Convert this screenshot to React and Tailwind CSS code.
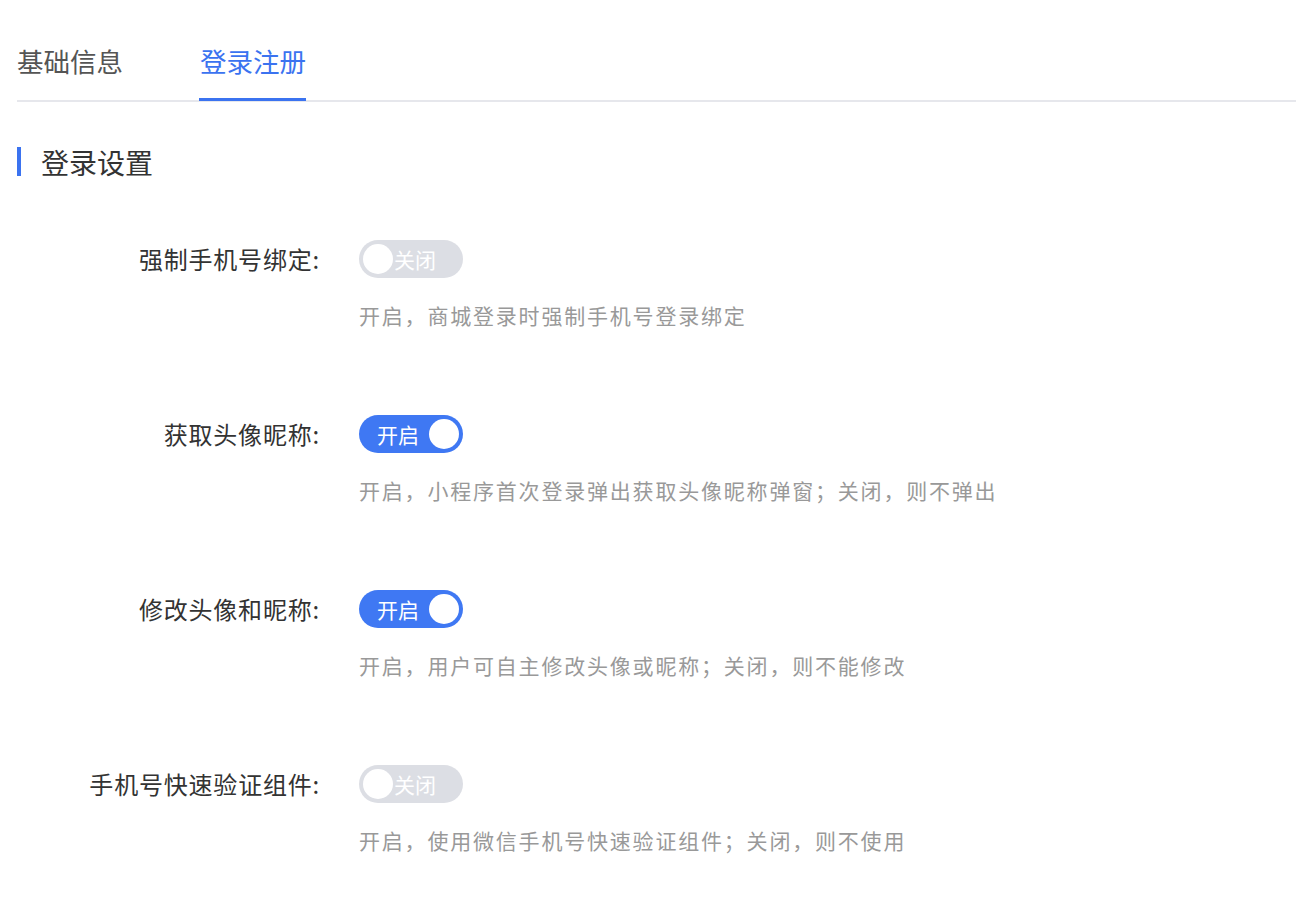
import React, { useState } from 'react';

const rows = [
    { label: '强制手机号绑定:', on: false, desc: '开启，商城登录时强制手机号登录绑定' },
    { label: '获取头像昵称:', on: true, desc: '开启，小程序首次登录弹出获取头像昵称弹窗；关闭，则不弹出' },
    { label: '修改头像和昵称:', on: true, desc: '开启，用户可自主修改头像或昵称；关闭，则不能修改' },
    { label: '手机号快速验证组件:', on: false, desc: '开启，使用微信手机号快速验证组件；关闭，则不使用' },
];

const Toggle = ({ on, onChange }) => (
    <button
        onClick={onChange}
        className={`relative flex h-[38px] w-[104px] items-center rounded-full ${on ? 'bg-[#3f78f3]' : 'bg-[#dcdee4]'}`}
    >
        {on ? (
            <>
                <span className="pl-[18px] text-[21px] leading-none text-white">开启</span>
                <span className="absolute right-[4px] top-[4px] h-[30px] w-[30px] rounded-full bg-white" />
            </>
        ) : (
            <>
                <span className="absolute left-[4px] top-[4px] h-[30px] w-[30px] rounded-full bg-white" />
                <span className="pl-[35px] text-[21px] leading-none text-white">关闭</span>
            </>
        )}
    </button>
);

export default function App() {
    const [tab, setTab] = useState(1);
    const [values, setValues] = useState(rows.map(r => r.on));

    return (
        <div className="min-h-[914px] bg-white pl-[17px]" style={{ fontFamily: '"Noto Sans CJK SC", "Noto Sans", sans-serif' }}>
            {/* Tabs */}
            <div className="flex h-[102px] border-b-2 border-[#e6e7ec]">
                {['基础信息', '登录注册'].map((t, i) => (
                    <div
                        key={t}
                        onClick={() => setTab(i)}
                        className={`relative mr-[77px] flex cursor-pointer items-center pt-[22px] text-[26.5px] ${tab === i ? 'text-[#3b73f0]' : 'text-[#555]'}`}
                    >
                        {t}
                        {tab === i && <span className="absolute bottom-[-1px] left-[-1px] right-0 h-[3px] bg-[#3b73f0]" />}
                    </div>
                ))}
            </div>

            {/* Section title */}
            <div className="mt-[45px] flex items-center">
                <span className="h-[29px] w-[4px] bg-[#3b73f0]" />
                <span className="ml-[20px] text-[28px] leading-none text-[#333]">登录设置</span>
            </div>

            {/* Settings */}
            <div className="mt-[64px] flex flex-col gap-[86px]">
                {rows.map((r, i) => (
                    <div key={r.label} className="flex">
                        <div className="flex h-[38px] w-[303px] items-center justify-end text-[24px] tracking-[0.8px] text-[#333]">
                            {r.label}
                        </div>
                        <div className="ml-[39px] flex flex-col">
                            <Toggle on={values[i]} onChange={() => setValues(v => v.map((x, j) => (j === i ? !x : x)))} />
                            <div className="mt-[23px] h-[28px] text-[21px] leading-[28px] tracking-[1.8px] text-[#999]">{r.desc}</div>
                        </div>
                    </div>
                ))}
            </div>
        </div>
    );
}
